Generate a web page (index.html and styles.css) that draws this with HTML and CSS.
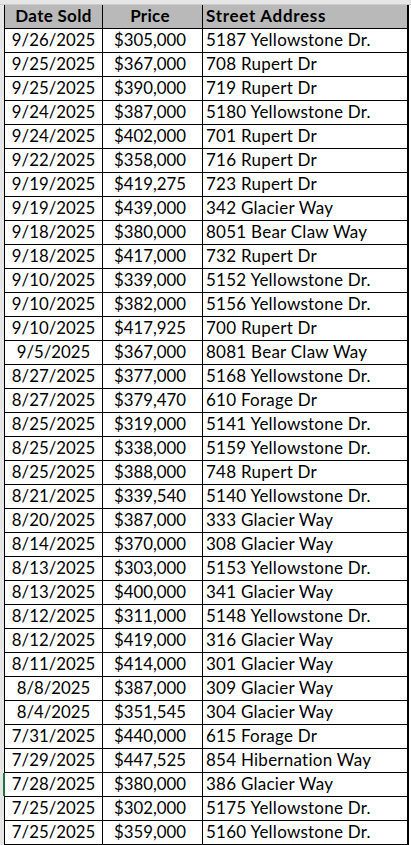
FILE: index.html
```html
<!DOCTYPE html>
<html lang="en">
<head>
<meta charset="utf-8">
<title>Home Sales</title>
<link rel="stylesheet" href="styles.css">
</head>
<body>
<div class="sheet">
  <div class="colhead"></div>
  <div class="main">
    <div class="rowhead"></div>
    <div class="grid" role="table">
      <div class="cell hd c1">Date Sold</div><div class="cell hd c2">Price</div><div class="cell hd c3">Street Address</div>
      <div class="cell c1">9/26/2025</div><div class="cell c2">$305,000</div><div class="cell c3">5187 Yellowstone Dr.</div>
      <div class="cell c1">9/25/2025</div><div class="cell c2">$367,000</div><div class="cell c3">708 Rupert Dr</div>
      <div class="cell c1">9/25/2025</div><div class="cell c2">$390,000</div><div class="cell c3">719 Rupert Dr</div>
      <div class="cell c1">9/24/2025</div><div class="cell c2">$387,000</div><div class="cell c3">5180 Yellowstone Dr.</div>
      <div class="cell c1">9/24/2025</div><div class="cell c2">$402,000</div><div class="cell c3">701 Rupert Dr</div>
      <div class="cell c1">9/22/2025</div><div class="cell c2">$358,000</div><div class="cell c3">716 Rupert Dr</div>
      <div class="cell c1">9/19/2025</div><div class="cell c2">$419,275</div><div class="cell c3">723 Rupert Dr</div>
      <div class="cell c1">9/19/2025</div><div class="cell c2">$439,000</div><div class="cell c3">342 Glacier Way</div>
      <div class="cell c1">9/18/2025</div><div class="cell c2">$380,000</div><div class="cell c3">8051 Bear Claw Way</div>
      <div class="cell c1">9/18/2025</div><div class="cell c2">$417,000</div><div class="cell c3">732 Rupert Dr</div>
      <div class="cell c1">9/10/2025</div><div class="cell c2">$339,000</div><div class="cell c3">5152 Yellowstone Dr.</div>
      <div class="cell c1">9/10/2025</div><div class="cell c2">$382,000</div><div class="cell c3">5156 Yellowstone Dr.</div>
      <div class="cell c1">9/10/2025</div><div class="cell c2">$417,925</div><div class="cell c3">700 Rupert Dr</div>
      <div class="cell c1">9/5/2025</div><div class="cell c2">$367,000</div><div class="cell c3">8081 Bear Claw Way</div>
      <div class="cell c1">8/27/2025</div><div class="cell c2">$377,000</div><div class="cell c3">5168 Yellowstone Dr.</div>
      <div class="cell c1">8/27/2025</div><div class="cell c2">$379,470</div><div class="cell c3">610 Forage Dr</div>
      <div class="cell c1">8/25/2025</div><div class="cell c2">$319,000</div><div class="cell c3">5141 Yellowstone Dr.</div>
      <div class="cell c1">8/25/2025</div><div class="cell c2">$338,000</div><div class="cell c3">5159 Yellowstone Dr.</div>
      <div class="cell c1">8/25/2025</div><div class="cell c2">$388,000</div><div class="cell c3">748 Rupert Dr</div>
      <div class="cell c1">8/21/2025</div><div class="cell c2">$339,540</div><div class="cell c3">5140 Yellowstone Dr.</div>
      <div class="cell c1">8/20/2025</div><div class="cell c2">$387,000</div><div class="cell c3">333 Glacier Way</div>
      <div class="cell c1">8/14/2025</div><div class="cell c2">$370,000</div><div class="cell c3">308 Glacier Way</div>
      <div class="cell c1">8/13/2025</div><div class="cell c2">$303,000</div><div class="cell c3">5153 Yellowstone Dr.</div>
      <div class="cell c1">8/13/2025</div><div class="cell c2">$400,000</div><div class="cell c3">341 Glacier Way</div>
      <div class="cell c1">8/12/2025</div><div class="cell c2">$311,000</div><div class="cell c3">5148 Yellowstone Dr.</div>
      <div class="cell c1">8/12/2025</div><div class="cell c2">$419,000</div><div class="cell c3">316 Glacier Way</div>
      <div class="cell c1">8/11/2025</div><div class="cell c2">$414,000</div><div class="cell c3">301 Glacier Way</div>
      <div class="cell c1">8/8/2025</div><div class="cell c2">$387,000</div><div class="cell c3">309 Glacier Way</div>
      <div class="cell c1">8/4/2025</div><div class="cell c2">$351,545</div><div class="cell c3">304 Glacier Way</div>
      <div class="cell c1">7/31/2025</div><div class="cell c2">$440,000</div><div class="cell c3">615 Forage Dr</div>
      <div class="cell c1">7/29/2025</div><div class="cell c2">$447,525</div><div class="cell c3">854 Hibernation Way</div>
      <div class="cell c1 sel">7/28/2025</div><div class="cell c2">$380,000</div><div class="cell c3">386 Glacier Way</div>
      <div class="cell c1">7/25/2025</div><div class="cell c2">$302,000</div><div class="cell c3">5175 Yellowstone Dr.</div>
      <div class="cell c1">7/25/2025</div><div class="cell c2">$359,000</div><div class="cell c3">5160 Yellowstone Dr.</div>
    </div>
    <div class="rest"></div>
  </div>
</div>
</body>
</html>
```

FILE: styles.css
```css
html, body {
  margin: 0;
  padding: 0;
  background: #ffffff;
}

.sheet {
  display: flex;
  flex-direction: column;
  width: 411px;
  height: 845px;
  overflow: hidden;
  font-family: Lato, "Noto Sans", sans-serif;
  font-size: 16.8px;
  color: #000;
}

.colhead {
  height: 4px;
  background: #e6e6e6;
  border-bottom: 1px solid #cdcdcd;
  flex: none;
}

.main {
  display: flex;
  flex: 1;
}

.rowhead {
  width: 4px;
  flex: none;
  background: #e6e6e6;
}

.grid {
  display: grid;
  grid-template-columns: 97px 99px 204px;
  grid-auto-rows: 23px;
  gap: 1px;
  background: #000;
  padding: 0 2px 1px 1px;
  align-self: flex-start;
}

.cell {
  position: relative;
  background: #fff;
  display: flex;
  align-items: flex-end;
  line-height: 20px;
  padding-bottom: 2px;
  box-sizing: border-box;
  white-space: nowrap;
}

.c1 {
  justify-content: center;
}

.c2 {
  justify-content: center;
  padding-right: 5px;
}

.c3 {
  justify-content: flex-start;
  padding-left: 3px;
  font-size: 17px;
  letter-spacing: 0.25px;
}

.hd {
  background: #b9b9b9;
  font-weight: 700;
  font-size: 17px;
  letter-spacing: 0.3px;
}

.hd.c3 {
  letter-spacing: 0.7px;
}

.sel::before {
  content: "";
  position: absolute;
  left: -2px;
  top: 0;
  bottom: 0;
  width: 2px;
  background: #217346;
}

.rest {
  flex: 1;
  background: #fff;
}
```
